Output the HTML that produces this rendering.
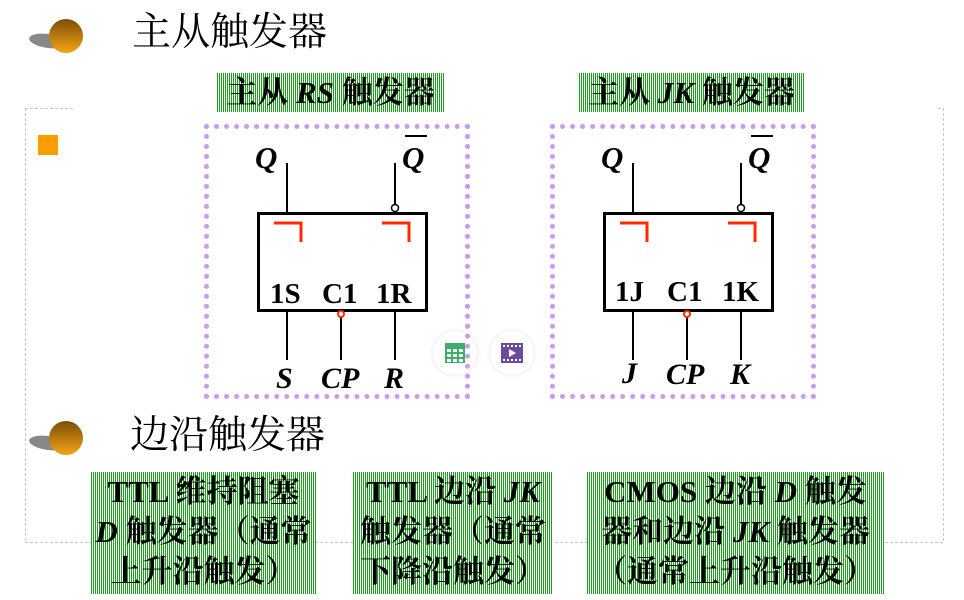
<!DOCTYPE html>
<html><head><meta charset="utf-8"><style>
body{margin:0;width:964px;height:600px;overflow:hidden;background:#fff;position:relative;font-family:"Liberation Serif","Noto Serif CJK SC",serif}
.a{position:absolute}
.t{font-size:39px;color:#000;white-space:nowrap;line-height:46px}
.g{background:repeating-linear-gradient(90deg,#1aa01a 0 1px,#fff 1px 2px);}
.lb{font-size:31px;font-weight:bold;white-space:nowrap;text-align:center;line-height:39px}
.bx{font-size:31px;font-weight:bold;line-height:40px;text-align:center;white-space:nowrap}
.pb{border:5px dotted #c79cf2;box-sizing:border-box}
.ic{width:44px;height:44px;border-radius:50%;background:#fff;box-shadow:0 0 4px rgba(0,0,0,.12)}
</style></head><body>
<svg class="a" style="left:0;top:0" width="964" height="600">
<defs><linearGradient id="bg" x1="0" y1="0" x2="0" y2="1"><stop offset="0" stop-color="#7a4e08"/><stop offset="1" stop-color="#f7a416"/></linearGradient></defs>
<g stroke="#c8c8c8" stroke-dasharray="3,2" fill="none">
<line x1="25.5" y1="108" x2="25.5" y2="542"/><line x1="25" y1="108.5" x2="73" y2="108.5"/>
<line x1="943.5" y1="108" x2="943.5" y2="542"/><line x1="938" y1="108.5" x2="943" y2="108.5"/>
<line x1="25" y1="542.5" x2="943" y2="542.5"/></g>
<ellipse cx="48" cy="41" rx="19" ry="7" fill="#888" transform="rotate(8 48 41)"/>
<circle cx="66" cy="36" r="17" fill="url(#bg)"/>
<ellipse cx="48" cy="443" rx="19" ry="7" fill="#888" transform="rotate(8 48 443)"/>
<circle cx="66" cy="438" r="17" fill="url(#bg)"/>
<rect x="38" y="135" width="20" height="20" fill="#ff9c00"/>
</svg>
<div class="a t" style="left:132px;top:10px">主从触发器</div>
<div class="a t" style="left:130px;top:413px">边沿触发器</div>
<div class="a g lb" style="left:217px;top:73px;width:227px;height:39px">主从 <i>RS</i> 触发器</div>
<div class="a g lb" style="left:579px;top:73px;width:225px;height:39px">主从 <i>JK</i> 触发器</div>
<div class="a pb" style="left:204px;top:124px;width:266px;height:275px"></div>
<div class="a pb" style="left:550px;top:124px;width:266px;height:275px"></div>
<svg class="a" style="left:0;top:0" width="964" height="600" font-family="Liberation Serif" font-weight="bold">
<g id="ff">
<line x1="287" y1="163" x2="287" y2="213" stroke="#000" stroke-width="2"/>
<line x1="395" y1="163" x2="395" y2="205" stroke="#000" stroke-width="2"/>
<circle cx="395" cy="208" r="3.5" fill="#fff" stroke="#000" stroke-width="1.5"/>
<rect x="258.5" y="213.5" width="168" height="97" fill="none" stroke="#000" stroke-width="3"/>
<path d="M274 223H301V242M382 223H409V242" fill="none" stroke="#ff2a00" stroke-width="3"/>
<line x1="287" y1="311" x2="287" y2="360" stroke="#000" stroke-width="2"/>
<line x1="341" y1="316" x2="341" y2="360" stroke="#000" stroke-width="2"/>
<line x1="395" y1="311" x2="395" y2="360" stroke="#000" stroke-width="2"/>
<circle cx="341" cy="314" r="3" fill="#fff" stroke="#ff2a00" stroke-width="2"/>
<text x="255" y="168" font-size="31" font-style="italic">Q</text>
<text x="402" y="168" font-size="31" font-style="italic">Q</text>
<line x1="405" y1="136" x2="427" y2="136" stroke="#000" stroke-width="2"/>
</g>
<use href="#ff" x="346"/>
<text x="270" y="303" font-size="29">1S</text><text x="322" y="303" font-size="29">C1</text><text x="376" y="303" font-size="29">1R</text>
<text x="615" y="301" font-size="29">1J</text><text x="667" y="301" font-size="29">C1</text><text x="722" y="301" font-size="29">1K</text>
<g font-style="italic" font-size="30">
<text x="276" y="388">S</text><text x="321" y="388">CP</text><text x="384" y="388">R</text>
<text x="622" y="383">J</text><text x="666" y="384">CP</text><text x="730" y="384">K</text></g>
</svg>
<div class="a ic" style="left:433px;top:331px"></div>
<div class="a ic" style="left:490px;top:331px"></div>
<svg class="a" style="left:445px;top:343px" width="20" height="20"><rect width="20" height="20" fill="#3fae6a"/><g fill="#fff"><rect x="2" y="6" width="4" height="3"/><rect x="8" y="6" width="4" height="3"/><rect x="14" y="6" width="4" height="3"/><rect x="2" y="11" width="4" height="3"/><rect x="8" y="11" width="4" height="3"/><rect x="14" y="11" width="4" height="3"/><rect x="2" y="16" width="4" height="3"/><rect x="8" y="16" width="4" height="3"/><rect x="14" y="16" width="4" height="3"/></g></svg>
<div class="a" style="left:465px;top:124px;width:5px;height:275px;border-left:5px dotted #c79cf2;box-sizing:border-box"></div>
<svg class="a" style="left:501px;top:343px" width="22" height="20"><rect width="22" height="20" fill="#6a4c9c"/><g fill="#fff"><rect x="2" y="2" width="2" height="2"/><rect x="6" y="2" width="2" height="2"/><rect x="10" y="2" width="2" height="2"/><rect x="14" y="2" width="2" height="2"/><rect x="18" y="2" width="2" height="2"/><rect x="2" y="16" width="2" height="2"/><rect x="6" y="16" width="2" height="2"/><rect x="10" y="16" width="2" height="2"/><rect x="14" y="16" width="2" height="2"/><rect x="18" y="16" width="2" height="2"/><path d="M8 6L15 10L8 14Z"/></g></svg>
<div class="a g bx" style="left:91px;top:472px;width:225px;height:122px">TTL 维持阻塞<br><i>D</i> 触发器（通常<br>上升沿触发）</div>
<div class="a g bx" style="left:353px;top:472px;width:200px;height:122px">TTL 边沿 <i>JK</i><br>触发器（通常<br>下降沿触发）</div>
<div class="a g bx" style="left:587px;top:472px;width:297px;height:122px">CMOS 边沿 <i>D</i> 触发<br>器和边沿 <i>JK</i> 触发器<br>（通常上升沿触发）</div>
</body></html>
